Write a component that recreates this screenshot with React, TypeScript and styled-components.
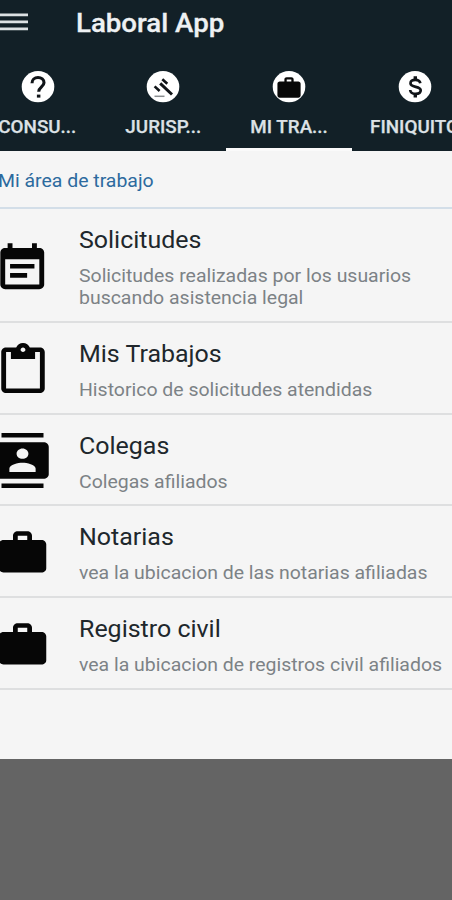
import React from 'react';
import styled, { createGlobalStyle } from 'styled-components';

const GlobalStyle = createGlobalStyle`
  *, *::before, *::after { box-sizing: border-box; }
  body { margin: 0; background: #646464; overflow: hidden; }
`;

const Screen = styled.div`
  display: flex;
  flex-direction: column;
  width: 452px;
  height: 900px;
  overflow: hidden;
  background: #646464;
  font-family: Roboto, 'Liberation Sans', sans-serif;
`;

const Header = styled.header`
  flex: none;
  height: 151px;
  display: flex;
  flex-direction: column;
  background: #122027;
`;

const Toolbar = styled.div`
  height: 46px;
  display: flex;
  align-items: center;
`;

const MenuButton = styled.button`
  width: 76px;
  height: 46px;
  padding: 0;
  border: 0;
  background: none;
  display: flex;
  align-items: center;
  svg { display: block; margin-top: -3px; }
`;

const Title = styled.h1`
  margin: 0;
  padding-top: 1px;
  font-size: 25px;
  line-height: 46px;
  font-weight: 500;
  color: #eef1f3;
  -webkit-text-stroke: 0.3px #eef1f3;
  white-space: nowrap;
  transform: scaleX(1.105);
  transform-origin: left;
`;

const Tabs = styled.nav`
  flex: 1;
  display: flex;
  margin-left: -25px;
`;

const Tab = styled.div<{ $active?: boolean }>`
  flex: none;
  width: 125.6px;
  display: flex;
  flex-direction: column;
  align-items: center;
  padding-top: 25px;
  border-bottom: 3px solid ${(p) => (p.$active ? '#fafafa' : 'transparent')};
`;

const TabBadge = styled.span`
  width: 34px;
  height: 32px;
  display: flex;
  svg { display: block; }
`;

const TabLabel = styled.span`
  margin-top: 12px;
  font-size: 18px;
  line-height: 23px;
  font-weight: 500;
  color: #dde2e6;
  -webkit-text-stroke: 0.25px #dde2e6;
  white-space: nowrap;
  transform: scaleX(1.045);
`;

const Content = styled.main`
  flex: none;
  height: 608px;
  background: #f5f5f5;
`;

const ListHeader = styled.div`
  height: 58px;
  border-bottom: 2px solid #d3dee8;
  color: #2c6a9e;
  font-size: 18px;
  line-height: 60px;
`;

const HeaderText = styled.span`
  display: block;
  width: max-content;
  margin-left: -2px;
  transform: scaleX(1.08);
  transform-origin: left;
`;

const Row = styled.div<{ $height: number }>`
  height: ${(p) => p.$height}px;
  display: flex;
  border-bottom: 2px solid #dedfe0;
`;

const IconSlot = styled.div<{ $shift: number }>`
  flex: none;
  width: 46px;
  margin-right: 33px;
  padding-top: ${(p) => p.$shift}px;
  display: flex;
  justify-content: center;
  svg { flex: none; display: block; margin-left: -1px; }
`;

const RowText = styled.div`
  padding-top: 16px;
  white-space: pre;
`;

const RowTitle = styled.h2`
  margin: 0;
  width: max-content;
  font-size: 24px;
  line-height: 30px;
  font-weight: 400;
  color: #20272c;
  transform: scaleX(1.04);
  transform-origin: left;
`;

const RowNote = styled.p`
  margin: 10px 0 0;
  width: max-content;
  font-size: 18px;
  line-height: 21.5px;
  color: #7c8286;
  transform: scaleX(1.08);
  transform-origin: left;
`;

type Glyph = { path: string; w: number; h: number; shift: number };

const WORK =
  'M20 6h-4V4c0-1.11-.89-2-2-2h-4c-1.11 0-2 .89-2 2v2H4c-1.11 0-1.99.89-1.99 2L2 19c0 1.11.89 2 2 2h16c1.11 0 2-.89 2-2V8c0-1.11-.89-2-2-2zm-6 0h-4V4h4v2z';

const EVENT_NOTE: Glyph = {
  path: 'M17 10H7v2h10v-2zm2-7h-1V1h-2v2H8V1H6v2H5c-1.11 0-1.99.9-1.99 2L3 19c0 1.1.89 2 2 2h14c1.1 0 2-.9 2-2V5c0-1.1-.9-2-2-2zm0 16H5V8h14v11zm-5-5H7v2h7v-2z',
  w: 58.5, h: 55, shift: 31.5,
};
const CLIPBOARD: Glyph = {
  path: 'M19 2h-4.18C14.4.84 13.3 0 12 0c-1.3 0-2.4.84-2.82 2H5c-1.1 0-2 .9-2 2v16c0 1.1.9 2 2 2h14c1.1 0 2-.9 2-2V4c0-1.1-.9-2-2-2zm-7 0c.55 0 1 .45 1 1s-.45 1-1 1-1-.45-1-1 .45-1 1-1zm7 18H5V4h2v3h10V4h2v16z',
  w: 58, h: 54.5, shift: 19.5,
};
const CONTACTS: Glyph = {
  path: 'M20 0H4v2h16V0zM4 24h16v-2H4v2zM20 4H4c-1.1 0-2 .9-2 2v12c0 1.1.9 2 2 2h16c1.1 0 2-.9 2-2V6c0-1.1-.9-2-2-2zm-8 2.75c1.24 0 2.25 1.01 2.25 2.25s-1.01 2.25-2.25 2.25S9.75 10.24 9.75 9 10.76 6.75 12 6.75zM17 17H7v-1.5c0-1.67 3.33-2.5 5-2.5s5 .83 5 2.5V17z',
  w: 63, h: 55, shift: 18,
};
const BRIEFCASE: Glyph = { path: WORK, w: 57, h: 52, shift: 20.5 };

const rows: { title: string; note: string; height: number; glyph: Glyph }[] = [
  { title: 'Solicitudes', note: 'Solicitudes realizadas por los usuarios\nbuscando asistencia legal', height: 114, glyph: EVENT_NOTE },
  { title: 'Mis Trabajos', note: 'Historico de solicitudes atendidas', height: 91.7, glyph: CLIPBOARD },
  { title: 'Colegas', note: 'Colegas afiliados', height: 91.7, glyph: CONTACTS },
  { title: 'Notarias', note: 'vea la ubicacion de las notarias afiliadas', height: 91.7, glyph: BRIEFCASE },
  { title: 'Registro civil', note: 'vea la ubicacion de registros civil afiliados', height: 91.7, glyph: BRIEFCASE },
];

const Disc = ({ children }: { children: React.ReactNode }) => (
  <svg width="34" height="32" viewBox="0 0 34 32">
    <ellipse cx="17" cy="15.7" rx="16.3" ry="15.6" fill="#fff" />
    {children}
  </svg>
);

const tabs = [
  {
    label: 'CONSU...',
    art: (
      <>
        <path d="M11 12.2c0-3.5 2.6-5.7 6-5.7s6 2.1 6 5.2c0 4-5.3 4.4-5.3 9" fill="none" stroke="#101418" strokeWidth="3.1" />
        <rect x="15.9" y="23.6" width="3.5" height="3" fill="#101418" />
      </>
    ),
  },
  {
    label: 'JURISP...',
    art: (
      <g stroke="#101418" fill="none">
        <path d="M14.2 12.3L26 23.5" strokeWidth="3" />
        <path d="M8.6 15.4l5 4.6M16.3 8.2l5 4.6" strokeWidth="2.6" />
        <path d="M8.5 25.3h10" stroke="#8a8d90" strokeWidth="1.5" />
      </g>
    ),
  },
  {
    label: 'MI TRA...',
    active: true,
    art: <path d={WORK} fill="#080808" transform="translate(3.1 4.2) scale(1.16 1.07)" />,
  },
  {
    label: 'FINIQUITO',
    art: (
      <g stroke="#101418" fill="none" strokeWidth="2.7">
        <path d="M22.3 12.2c-.4-2.2-2.2-3.4-5-3.4-2.9 0-4.8 1.3-4.8 3.4 0 4.9 10.2 2.4 10.2 7.1 0 2.2-2.1 3.6-5.1 3.6-3.2 0-5.2-1.4-5.4-3.9" />
        <path d="M17.3 5.2v3.8M17.3 22.6v3.8" strokeWidth="3.4" />
      </g>
    ),
  },
];

export default function App() {
  return (
    <Screen>
      <GlobalStyle />
      <Header>
        <Toolbar>
          <MenuButton aria-label="Menu">
            <svg width="28" height="20" viewBox="0 0 28 20">
              <path d="M0 2.8h28M0 9.8h28M0 16.8h28" stroke="#dce1e3" strokeWidth="2.8" />
            </svg>
          </MenuButton>
          <Title>Laboral App</Title>
        </Toolbar>
        <Tabs>
          {tabs.map((t) => (
            <Tab key={t.label} $active={t.active}>
              <TabBadge><Disc>{t.art}</Disc></TabBadge>
              <TabLabel>{t.label}</TabLabel>
            </Tab>
          ))}
        </Tabs>
      </Header>
      <Content>
        <ListHeader><HeaderText>Mi área de trabajo</HeaderText></ListHeader>
        {rows.map((r) => (
          <Row key={r.title} $height={r.height}>
            <IconSlot $shift={r.glyph.shift}>
              <svg width={r.glyph.w} height={r.glyph.h} viewBox="0 0 24 24" preserveAspectRatio="none">
                <path d={r.glyph.path} fill="#060606" />
              </svg>
            </IconSlot>
            <RowText>
              <RowTitle>{r.title}</RowTitle>
              <RowNote>{r.note}</RowNote>
            </RowText>
          </Row>
        ))}
      </Content>
    </Screen>
  );
}
